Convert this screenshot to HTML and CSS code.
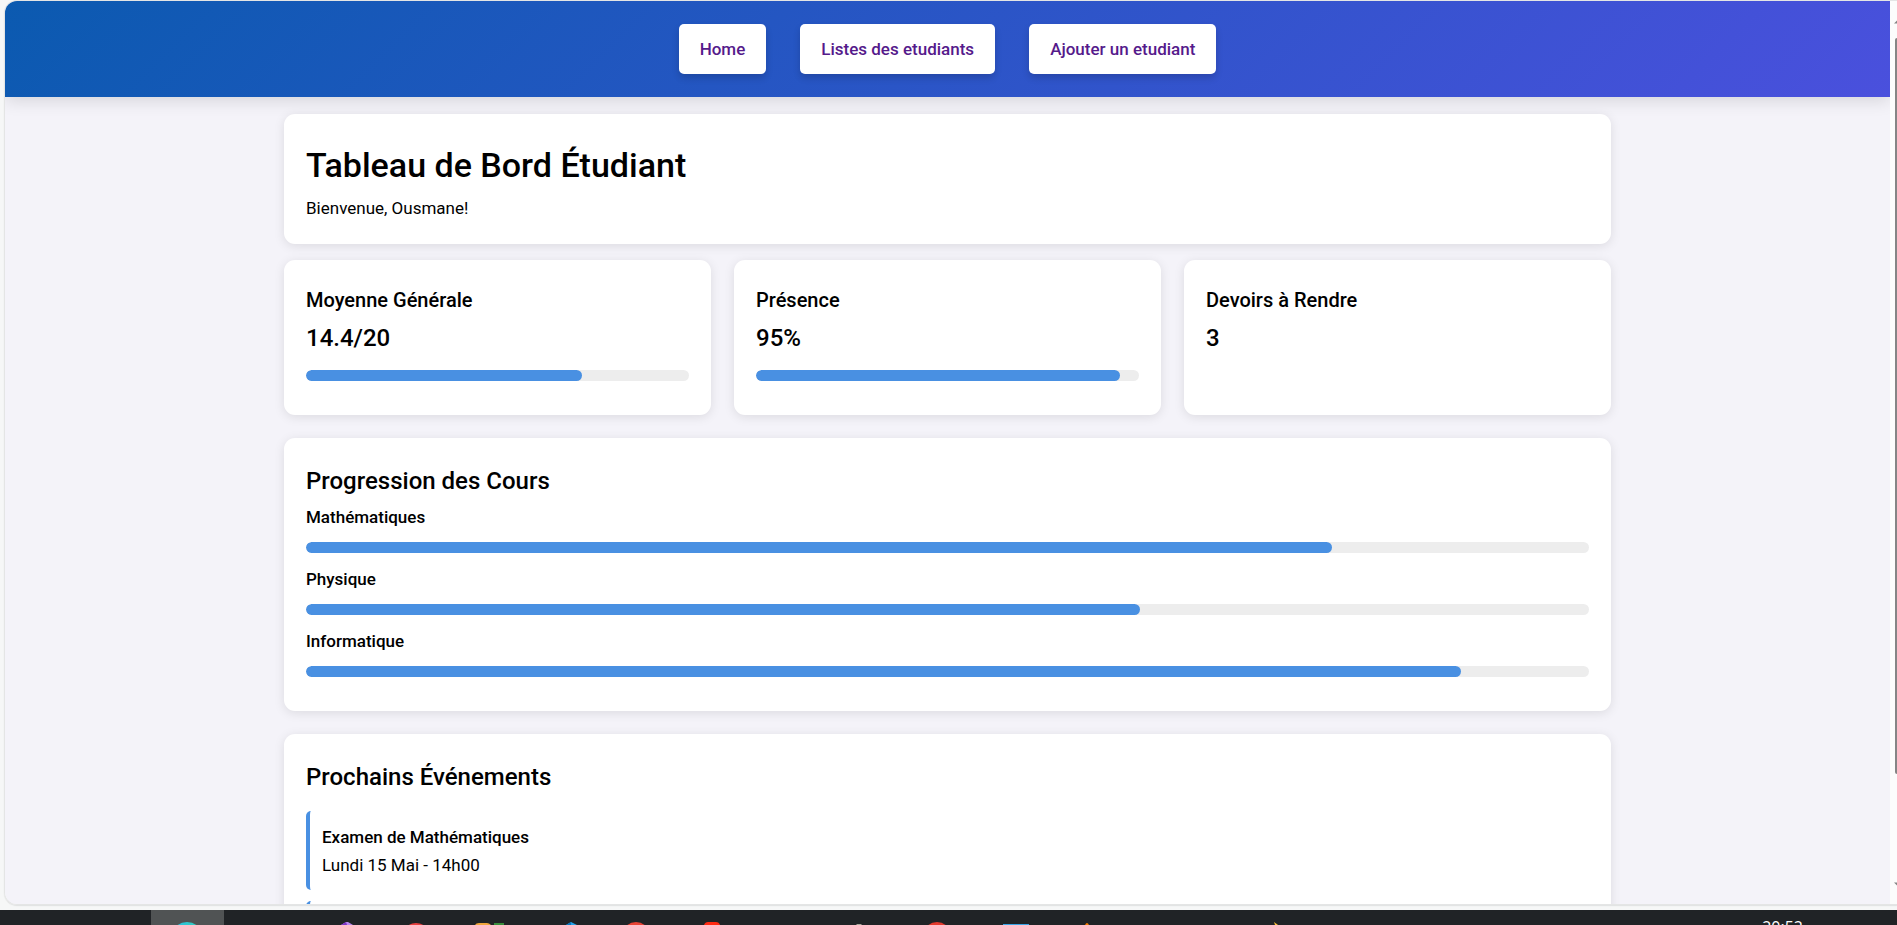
FILE: index.html
```html
<!DOCTYPE html>
<html lang="fr">
<head>
<meta charset="utf-8">
<meta name="viewport" content="width=device-width, initial-scale=1">
<title>Tableau de Bord Étudiant</title>
<link rel="stylesheet" href="styles.css">
</head>
<body class="desktop">
<div class="window">
  <div class="viewport">
    <header class="topbar">
      <nav class="nav">
        <a class="nav-link" href="#home">Home</a>
        <a class="nav-link" href="#liste">Listes des etudiants</a>
        <a class="nav-link" href="#ajouter">Ajouter un etudiant</a>
      </nav>
    </header>
    <main class="container">
      <section class="card welcome">
        <h1 class="title">Tableau de Bord Étudiant</h1>
        <p class="text">Bienvenue, Ousmane!</p>
      </section>
      <div class="stats">
        <section class="card">
          <h3 class="stat-name">Moyenne Générale</h3>
          <p class="stat-value">14.4/20</p>
          <div class="bar"><div class="fill" style="width:72%"></div></div>
        </section>
        <section class="card">
          <h3 class="stat-name">Présence</h3>
          <p class="stat-value">95%</p>
          <div class="bar"><div class="fill" style="width:95%"></div></div>
        </section>
        <section class="card">
          <h3 class="stat-name">Devoirs à Rendre</h3>
          <p class="stat-value">3</p>
        </section>
      </div>
      <section class="card">
        <h2 class="heading">Progression des Cours</h2>
        <h4 class="label">Mathématiques</h4>
        <div class="bar"><div class="fill" style="width:80%"></div></div>
        <h4 class="label">Physique</h4>
        <div class="bar"><div class="fill" style="width:65%"></div></div>
        <h4 class="label">Informatique</h4>
        <div class="bar"><div class="fill" style="width:90%"></div></div>
      </section>
      <section class="card">
        <h2 class="heading">Prochains Événements</h2>
        <ul class="events">
          <li class="event">
            <h4 class="label">Examen de Mathématiques</h4>
            <p class="text">Lundi 15 Mai - 14h00</p>
          </li>
          <li class="event"></li>
        </ul>
      </section>
    </main>
  </div>
  <div class="scrollbar">
    <svg class="arrow" viewBox="0 0 7 4" aria-hidden="true"><path d="M4 3.5L7 0.5V3.5Z" fill="#858585"/></svg>
    <div class="thumb"></div>
    <svg class="arrow" viewBox="0 0 7 4" aria-hidden="true"><path d="M4 0.5H7V3.5Z" fill="#858585"/></svg>
  </div>
</div>
<footer class="taskbar">
  <svg class="apps" width="1300" height="15" viewBox="0 0 1300 15" aria-hidden="true">
    <rect x="151" width="73" height="15" fill="#505354"/>
    <defs><linearGradient id="edge"><stop offset="0" stop-color="#28bfe8"/><stop offset="1" stop-color="#35d0b5"/></linearGradient></defs>
    <circle cx="187" cy="28" r="16" fill="url(#edge)"/>
    <path d="M341 15L346 12L348 12L353 15Z" fill="#b887ef"/><path d="M341 15L346 12L347 15Z" fill="#7b35c4"/>
    <circle cx="416" cy="27" r="14" fill="#e8403f"/>
    <path d="M475 15Q476 13 479 13H487Q489 13 491 15Z" fill="#f0a63c"/><rect x="494" y="13" width="10" height="2" fill="#388e3c"/>
    <path d="M566 15L571 12L577 15Z" fill="#24a4ea"/><path d="M566 15L571 12V15Z" fill="#0875c0"/>
    <circle cx="636" cy="26" r="14" fill="#ea4335"/>
    <path d="M704 15Q705 12 708 12H716Q719 12 720 15Z" fill="#ff2a12"/>
    <path d="M856 14H861L862 15H857Z" fill="#aaa99c"/>
    <circle cx="937" cy="26" r="14" fill="#e43a2e"/>
    <rect x="1003" y="14" width="26" height="1" fill="#37a4e6"/>
    <path d="M1085 15Q1086 13 1087 13Q1088 13 1089 15Z" fill="#f57c00"/>
    <path d="M1274 12L1278 15H1275Z" fill="#ffc43a"/>
  </svg>
  <time class="clock">20:52</time>
</footer>
</body>
</html>
```
FILE: styles.css
```css
* { box-sizing: border-box; margin: 0; padding: 0; }

.desktop {
  height: 100vh;
  display: flex;
  flex-direction: column;
  overflow: hidden;
  background: #f6f7f7;
  font-family: Roboto, "Open Sans", sans-serif;
  font-size: 17px;
  line-height: 28px;
  color: #000;
}

.window {
  flex: 1;
  min-height: 0;
  display: flex;
  margin: 0 0 5px 4px;
  border: solid #e4e5e5;
  border-width: 1px 0 1px 1px;
  border-radius: 13px 0 0 13px;
  box-shadow: 0 1px 1px #e0e1e1;
  overflow: hidden;
}

.viewport { flex: 1; overflow: hidden; background: #f4f3f9; }

.topbar {
  padding: 23px;
  background: linear-gradient(135deg, #0b5ab0, #4a50dd);
  box-shadow: 0 4px 16px rgba(0, 0, 0, 0.12);
}

.nav { display: flex; justify-content: center; gap: 34px; }

.nav-link {
  padding: 11px 21px;
  border-radius: 5px;
  background: #fff;
  box-shadow: 0 4px 7px rgba(0, 0, 0, 0.16);
  color: #551a8b;
  font-weight: 500;
  text-decoration: none;
}

.container {
  max-width: 1327px;
  margin: 17px auto 0;
  display: flex;
  flex-direction: column;
  gap: 23px;
}

.card {
  padding: 22px;
  border-radius: 11px;
  background: #fff;
  box-shadow: 0 2px 11px rgba(0, 0, 0, 0.1);
}

.welcome { margin-bottom: -7px; }

.title { font-size: 34px; line-height: 58px; font-weight: 500; }

.stats {
  display: grid;
  grid-template-columns: repeat(3, 1fr);
  gap: 23px;
}

.stat-name { font-size: 20px; line-height: 36px; font-weight: 500; }
.stat-value { font-size: 24px; line-height: 40px; font-weight: 500; }
.heading { font-size: 24px; line-height: 43px; font-weight: 500; }
.label { font-size: 17px; font-weight: 500; }

.bar {
  height: 11px;
  margin: 12px 0;
  border-radius: 6px;
  background: #ededed;
  overflow: hidden;
}

.label + .bar { margin-top: 11px; }

.fill { height: 100%; border-radius: 6px; background: #4990e2; }

.events {
  margin-top: 12px;
  display: grid;
  gap: 11px;
  list-style: none;
}

.event {
  min-height: 79px;
  padding: 12px 12px 11px;
  border-left: 4px solid #4990e2;
  border-radius: 5px;
}

.scrollbar {
  width: 7px;
  display: flex;
  flex-direction: column;
  align-items: flex-end;
  padding: 19px 0 18px;
  background: #fcfcfc;
}

.arrow { width: 7px; height: 4px; }

.thumb {
  width: 2px;
  flex: 0 0 85%;
  margin: 14px 0 auto;
  border-radius: 2px 0 0 2px;
  background: #858585;
}

.taskbar {
  height: 15px;
  display: flex;
  justify-content: space-between;
  overflow: hidden;
  background: #202326;
}

.apps { flex: none; }

.clock {
  padding: 7px 94px 0 0;
  color: #fff;
  font-family: "Open Sans", sans-serif;
  font-size: 16px;
  line-height: 20px;
}
```
